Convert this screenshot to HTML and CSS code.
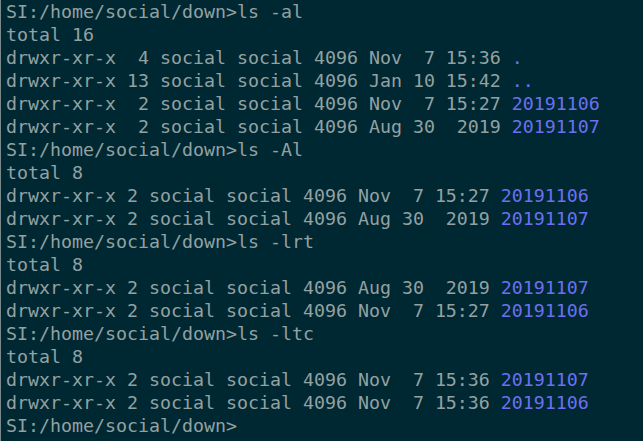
FILE: index.html
```html
<!DOCTYPE html>
<html>
<head>
<meta charset="utf-8">
<link rel="stylesheet" href="styles.css">
</head>
<body>
<div class="term">
<div class="line">SI:/home/social/down&gt;ls -al</div>
<div class="line">total 16</div>
<div class="line">drwxr-xr-x  4 social social 4096 Nov  7 15:36 <span class="dir">.</span></div>
<div class="line">drwxr-xr-x 13 social social 4096 Jan 10 15:42 <span class="dir">..</span></div>
<div class="line">drwxr-xr-x  2 social social 4096 Nov  7 15:27 <span class="dir">20191106</span></div>
<div class="line">drwxr-xr-x  2 social social 4096 Aug 30  2019 <span class="dir">20191107</span></div>
<div class="line">SI:/home/social/down&gt;ls -Al</div>
<div class="line">total 8</div>
<div class="line">drwxr-xr-x 2 social social 4096 Nov  7 15:27 <span class="dir">20191106</span></div>
<div class="line">drwxr-xr-x 2 social social 4096 Aug 30  2019 <span class="dir">20191107</span></div>
<div class="line">SI:/home/social/down&gt;ls -lrt</div>
<div class="line">total 8</div>
<div class="line">drwxr-xr-x 2 social social 4096 Aug 30  2019 <span class="dir">20191107</span></div>
<div class="line">drwxr-xr-x 2 social social 4096 Nov  7 15:27 <span class="dir">20191106</span></div>
<div class="line">SI:/home/social/down&gt;ls -ltc</div>
<div class="line">total 8</div>
<div class="line">drwxr-xr-x 2 social social 4096 Nov  7 15:36 <span class="dir">20191107</span></div>
<div class="line">drwxr-xr-x 2 social social 4096 Nov  7 15:36 <span class="dir">20191106</span></div>
<div class="line">SI:/home/social/down&gt;</div>
</div>
</body>
</html>
```
FILE: styles.css
```css
html, body {
  margin: 0;
  padding: 0;
  background: #002833;
  height: 100%;
}
.term {
  box-sizing: border-box;
  height: 100%;
  border-left: 1px solid #7a8a8c;
  padding: 0 0 0 5px;
  font-family: "DejaVu Sans Mono", monospace;
  font-size: 18.27px;
  line-height: 23px;
  color: #93a1a1;
}
.line {
  white-space: pre;
  height: 23px;
}
.dir {
  color: #6c70f0;
}
```
